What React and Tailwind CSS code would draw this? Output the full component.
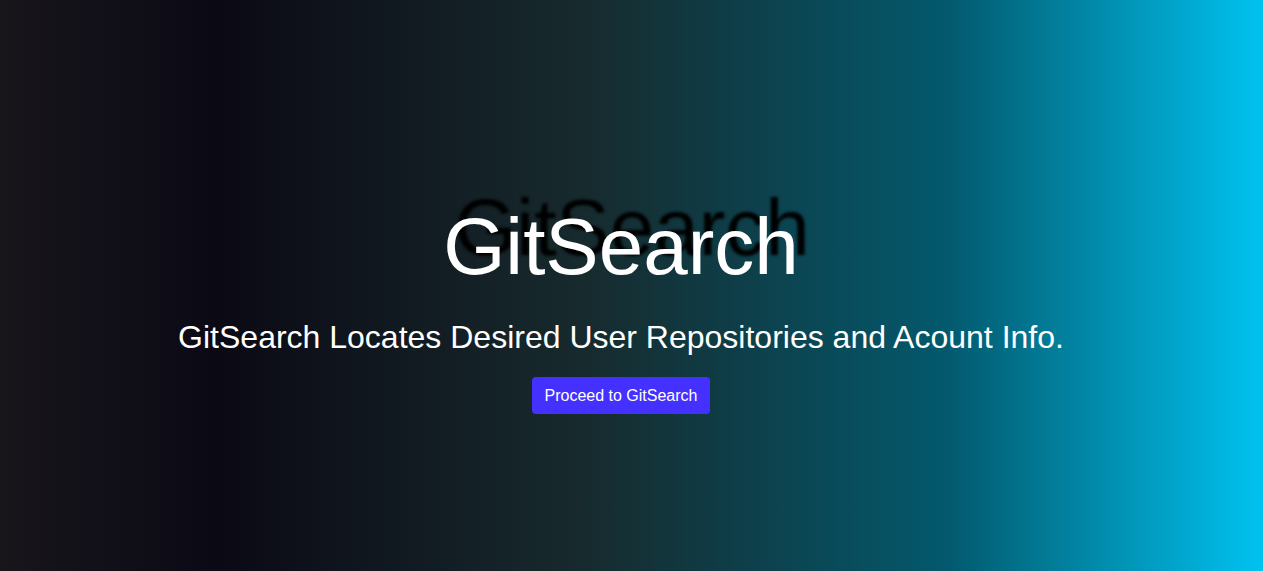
export default function App() {
  return (
    <div
      className="h-screen w-full overflow-hidden bg-[linear-gradient(to_right,#18161b_0%,#0b0914_17%,#172a2d_46%,#03596d_75%,#00c2f0_100%)] font-['Liberation_Sans',Arial,sans-serif] text-white"
    >
      <div className="flex flex-col items-center pt-[207px] pr-[21px]">
        <h1 className="text-[80px] leading-[80px] [text-shadow:11px_-19px_3px_#000]">GitSearch</h1>
        <p className="mt-[31px] text-[32px] leading-[38px]">
          GitSearch Locates Desired User Repositories and Acount Info.
        </p>
        <button className="mt-[21px] h-[37px] rounded-[4px] bg-[#4431ff] px-[13px] text-[16px] leading-[24px] text-white">
          Proceed to GitSearch
        </button>
      </div>
    </div>
  );
}
